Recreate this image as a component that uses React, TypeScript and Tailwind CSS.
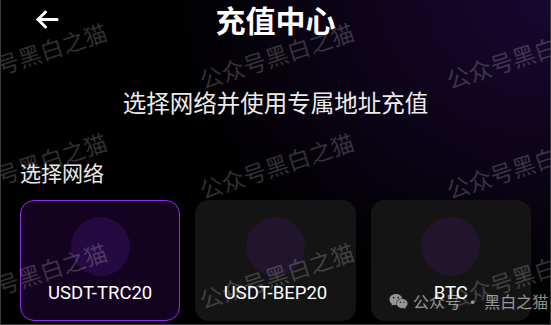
import { FaWeixin } from 'react-icons/fa'

const networks = [
    { name: 'USDT-TRC20', active: true },
    { name: 'USDT-BEP20', active: false },
    { name: 'BTC', active: false },
]

const cjk = "font-['Noto_Sans_CJK_SC','Noto_Sans',sans-serif]"

const App = () => {
    return (
        <div className="relative w-[551px] h-[325px] overflow-hidden border-x border-b border-[#3a3a3a] bg-[radial-gradient(ellipse_70%_95%_at_100%_0%,#170830_0%,#0e041c_45%,#000000_100%)] text-white">
            <div className="px-[19px]">
                <header className="grid grid-cols-[1fr_auto_1fr] items-center h-[38px]">
                    <button className="ml-[15px] w-[24px] h-[20px] flex items-center">
                        <svg width="24" height="19" viewBox="0 0 24 19" fill="none" stroke="white" strokeWidth="3" strokeLinecap="round" strokeLinejoin="round">
                            <path d="M3 9.5H22" />
                            <path d="M10.5 2L3 9.5L10.5 17" />
                        </svg>
                    </button>
                    <h1 className={`${cjk} text-[30px] leading-[38px] font-bold`}>充值中心</h1>
                    <div />
                </header>

                <p className={`${cjk} mt-[48px] text-center text-[23.5px] leading-[32px] text-[#ececec]`}>
                    选择网络并使用专属地址充值
                </p>

                <h2 className={`${cjk} mt-[40px] text-[21px] leading-[28px] text-[#e8e8e8]`}>选择网络</h2>

                <div className="mt-[14px] grid grid-cols-3 gap-[15px]">
                    {networks.map((n) =>
                        n.active ? (
                            <div
                                key={n.name}
                                className="h-[121px] rounded-[14px] border-[1.5px] border-[#8f2fe6] bg-[#130320] flex flex-col items-center pt-[15.5px]"
                            >
                                <div className="w-[59px] h-[59px] rounded-full bg-[#240a40]" />
                                <span className="mt-[5px] font-['Roboto',sans-serif] text-[18.5px] leading-[24px]">{n.name}</span>
                            </div>
                        ) : (
                            <div
                                key={n.name}
                                className="h-[121px] rounded-[14px] bg-[#141414] flex flex-col items-center pt-[17px]"
                            >
                                <div className="w-[59px] h-[59px] rounded-full bg-[#21152d]" />
                                <span className="mt-[5px] font-['Roboto',sans-serif] text-[18.5px] leading-[24px]">{n.name}</span>
                            </div>
                        ),
                    )}
                </div>
            </div>

            {/* watermark tiles */}
            <div className="pointer-events-none absolute left-[-95px] top-0 grid grid-cols-[repeat(3,247px)] grid-rows-[repeat(3,110px)]">
                {Array.from({ length: 9 }).map((_, i) => (
                    <div key={i} className="flex items-center justify-center">
                        <span className={`${cjk} -rotate-[18deg] whitespace-nowrap text-[23px] leading-none text-white/20`}>
                            公众号黑白之猫
                        </span>
                    </div>
                ))}
            </div>

            <div className={`pointer-events-none absolute left-[388px] top-[291px] flex items-center gap-[5px] ${cjk} text-[16px] leading-[20px] text-white/55`}>
                <FaWeixin className="w-[19px] h-[19px]" />
                <span>公众号 · 黑白之猫</span>
            </div>
        </div>
    )
}

export default App
